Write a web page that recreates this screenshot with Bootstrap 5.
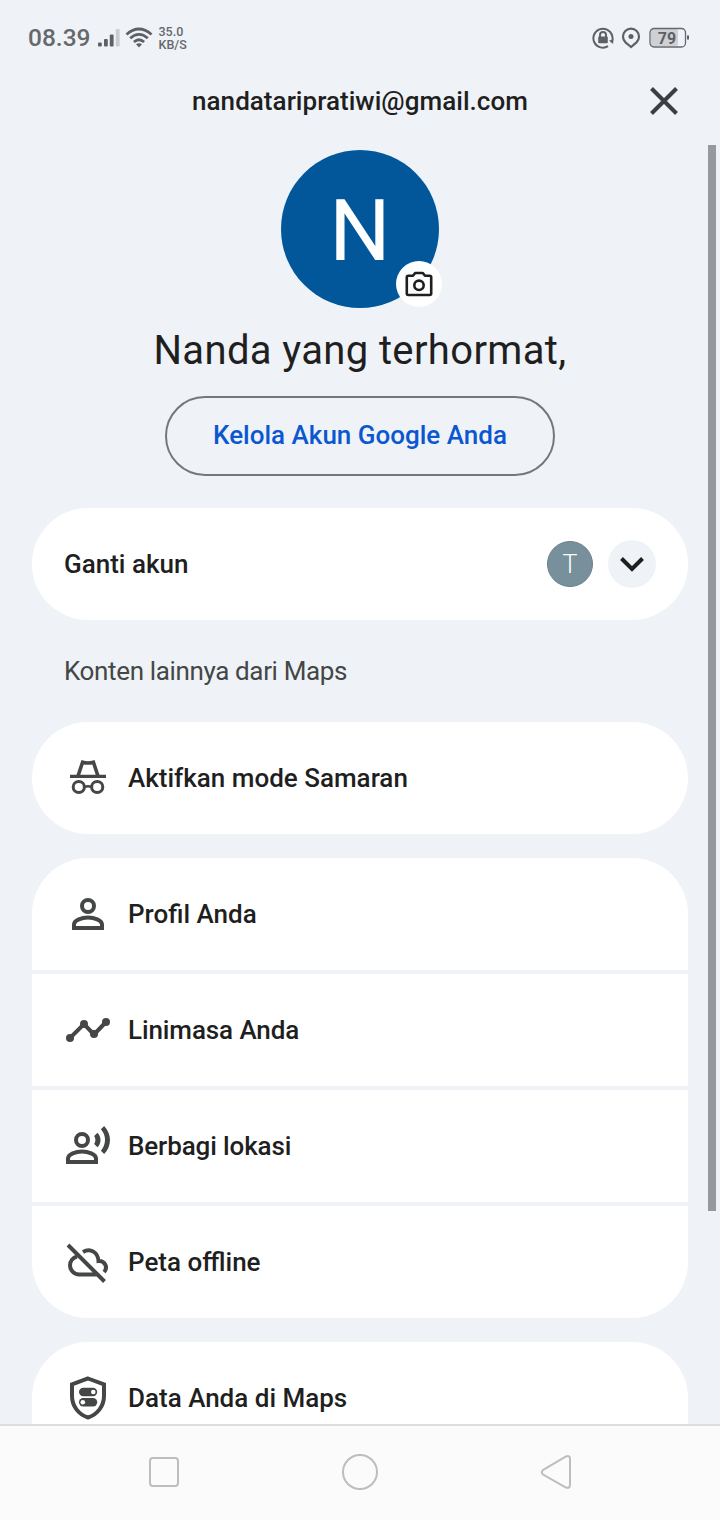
<!DOCTYPE html>
<html lang="id">
<head>
<meta charset="utf-8">
<meta name="viewport" content="width=device-width, initial-scale=1">
<title>Akun</title>
<link href="https://cdn.jsdelivr.net/npm/bootstrap@5.3.0/dist/css/bootstrap.min.css" rel="stylesheet">
<style>
body{background:#eff3f8;color:#1f1f1f;font-family:Roboto,"Liberation Sans",sans-serif;font-size:26px;line-height:32px;font-weight:500}
.screen{width:720px;height:1520px}
.status{height:72px;padding:3px 30px 0 28px;color:#66686c}
.clock{font-size:24.500px}
.speed{font-size:12.500px;line-height:13px}
.email-row{height:60px}
.t-email{margin-top:-2px;letter-spacing:.04px}
.close-btn{right:40px;top:13px}
.avatar{width:158px;height:158px;background:#02579b;color:#fff;font-size:86px;font-weight:400;margin-top:18px}
.avatar-letter{padding-top:3px}
.cam{width:46px;height:46px;right:-3px;bottom:1px;background:#fff}
.hello{font-size:40px;line-height:48px;font-weight:400;margin-top:19px;letter-spacing:.36px}
.manage{width:390px;height:80px;border:2px solid #74777a;color:#0b57d0;margin-top:21px;padding-bottom:2px}
.panel{background:#fff;border-radius:56px;overflow:hidden;margin:0 32px}
.item{height:112px;background:#fff;padding-left:32px;padding-right:32px}
.item svg{width:48px;height:48px;margin-right:16px;flex:none}
.group{background:#eff3f8;gap:4px}
.sub{font-weight:400;color:#444746;height:102px;padding-left:64px;letter-spacing:-.36px}
.tee{width:46px;height:46px;background:#78909c;color:#fff;font-size:25px;font-weight:300;border:1px solid #6b8089;padding-top:2px}
.chev{width:48px;height:48px;background:#eff3f8;margin-left:15px}
.item .chev svg{margin:0}
.cut{border-radius:56px 56px 0 0;height:82px}
.gap-panel{margin-top:24px}
.thumb{right:4px;top:145px;width:8px;height:1066px;background:#979a9c}
.sysnav{height:96px;background:#fbfbfb;border-top:2px solid #ddd;padding-bottom:4px}
</style>
</head>
<body>
<div class="screen position-relative d-flex flex-column overflow-hidden mx-auto">
  <div class="status d-flex align-items-center flex-shrink-0">
    <span class="clock">08.39</span>
    <svg style="margin-left:6px" width="24" height="20" viewBox="0 0 24 20" fill="#5e6064"><rect x="1" y="14.500" width="3.800" height="4" rx="1"/><rect x="7" y="11" width="3.800" height="7.500" rx="1"/><rect x="12.800" y="6.500" width="3.800" height="12" rx="1"/><rect x="18.800" y="1" width="3.800" height="17.500" rx="1" fill="#cbccd0"/></svg>
    <svg class="ms-1" width="28" height="22" viewBox="0 0 28 22" fill="none" stroke="#5e6064" stroke-width="2.800"><path d="M1.500 7.500Q14-3.500 26.500 7.500M5.200 11.300Q14 3.500 22.800 11.300M8.900 15Q14 10.500 19.100 15"/><path d="M11 17.300Q14 15 17 17.300L14 20.500Z" fill="#5e6064" stroke="none"/></svg>
    <span class="speed" style="margin-left:6px">35.0<br>KB/S</span>
    <svg class="ms-auto" width="22" height="22" viewBox="0 0 22 22" fill="none" stroke="#5e6064" stroke-width="2"><path d="M20 8.500A9.500 9.500 0 1 0 16 19.200M17.800 4.500A9.500 9.500 0 0 1 20.400 13"/><path d="M8 10V8a3 3 0 0 1 6 0v2"/><rect x="6.200" y="9.500" width="9.600" height="6.800" rx="1" fill="#5e6064" stroke="none"/><path d="M17 13.500l4.500-1-.5 4.500z" fill="#5e6064" stroke="none"/></svg>
    <svg style="margin-left:7px" width="20" height="22" viewBox="0 0 20 22" fill="none" stroke="#5e6064" stroke-width="2.200"><path d="M10 20L4.500 15.400A8 8 0 1 1 15.500 15.400Z"/><circle cx="10" cy="9.500" r="2.500" fill="#5e6064" stroke="none"/></svg>
    <svg style="margin-left:8px" width="41" height="22" viewBox="0 0 41 22"><rect x="2" y="2" width="27" height="17" rx="2" fill="#cfd0d3"/><rect x="1" y="1.500" width="35.500" height="18.500" rx="4" fill="none" stroke="#66686c" stroke-width="1.300"/><rect x="38" y="8.500" width="2" height="4" fill="#5e6064"/><text x="18" y="16.500" font-family="Roboto" font-size="16" font-weight="700" text-anchor="middle" fill="#5e6064">79</text></svg>
  </div>
  <div class="email-row position-relative d-flex align-items-center justify-content-center flex-shrink-0">
    <span class="t-email">nandataripratiwi@gmail.com</span>
    <svg class="close-btn position-absolute" width="32" height="32" viewBox="0 0 32 32" stroke="#3c3f41" stroke-width="4"><path d="M3.500 3.500l25 25M28.500 3.500l-25 25"/></svg>
  </div>
  <div class="avatar rounded-circle position-relative d-flex align-items-center justify-content-center align-self-center flex-shrink-0"><span class="avatar-letter">N</span>
    <div class="cam rounded-circle position-absolute d-flex align-items-center justify-content-center">
      <svg width="28" height="26" viewBox="0 0 28 26" fill="none" stroke="#1f1f1f" stroke-width="2.600" stroke-linejoin="round"><path d="M3.300 4.800H8L10.200 2H17.800L20 4.800H24.700Q26.200 4.800 26.200 6.300V22.500Q26.200 24 24.700 24H3.300Q1.800 24 1.800 22.500V6.300Q1.800 4.800 3.300 4.800Z"/><circle cx="14" cy="14.300" r="4.700"/></svg>
    </div>
  </div>
  <div class="hello text-center flex-shrink-0">Nanda yang terhormat,</div>
  <div class="manage rounded-pill d-flex align-items-center justify-content-center align-self-center flex-shrink-0">Kelola Akun Google Anda</div>
  <div class="panel flex-shrink-0" style="margin-top:32px">
    <div class="item d-flex align-items-center"><span>Ganti akun</span>
      <div class="tee rounded-circle ms-auto d-flex align-items-center justify-content-center">T</div>
      <div class="chev rounded-circle d-flex align-items-center justify-content-center"><svg viewBox="0 0 48 48" fill="none" stroke="#1f1f1f" stroke-width="4"><path d="M13.500 18.500L24 29l10.500-10.500"/></svg></div>
    </div>
  </div>
  <div class="sub d-flex align-items-center flex-shrink-0">Konten lainnya dari Maps</div>
  <div class="panel flex-shrink-0"><div class="item d-flex align-items-center">
    <svg viewBox="0 0 48 48" fill="none" stroke="#444746" stroke-width="3.600"><path d="M6 22.300H42" stroke-width="3.200"/><path d="M14 22L18.600 8.200Q24 9.800 29.400 8.200L34 22"/><circle cx="14.800" cy="33" r="5.600" stroke-width="3"/><circle cx="33.200" cy="33" r="5.600" stroke-width="3"/><path d="M20.500 32.800q3.500-1 7 0" stroke-width="2.600"/></svg>Aktifkan mode Samaran</div></div>
  <div class="panel group gap-panel d-flex flex-column flex-shrink-0">
    <div class="item d-flex align-items-center"><svg viewBox="0 0 48 48" fill="none" stroke="#444746" stroke-width="4"><circle cx="24" cy="16" r="6"/><path d="M10 38V34.500C10 30 18 27.500 24 27.500S38 30 38 34.500V38Z"/></svg>Profil Anda</div>
    <div class="item d-flex align-items-center" style="letter-spacing:-.1px"><svg viewBox="0 0 48 48" fill="#444746"><path d="M6 32L20 18 30 28.500 42 16" fill="none" stroke="#444746" stroke-width="4"/><circle cx="6" cy="32" r="4"/><circle cx="20" cy="18" r="4"/><circle cx="30" cy="28" r="4"/><circle cx="42" cy="16" r="4"/></svg>Linimasa Anda</div>
    <div class="item d-flex align-items-center" style="letter-spacing:-.12px"><svg viewBox="0 0 48 48" fill="none" stroke="#444746" stroke-width="4"><circle cx="18" cy="18" r="6"/><path d="M4 40V36.500C4 32 12 29.500 18 29.500S32 32 32 36.500V40Z"/><path transform="scale(2)" fill="#444746" stroke="none" d="M16.760 5.360l-1.680 1.690c.84 1.180.84 2.710 0 3.890l1.680 1.690c2.020-2.020 2.020-5.070 0-7.270zM20.070 2l-1.630 1.630c2.770 3.020 2.770 7.560 0 10.740L20.070 16c3.900-3.890 3.910-9.950 0-14z"/></svg>Berbagi lokasi</div>
    <div class="item d-flex align-items-center"><svg viewBox="0 0 48 48" fill="none" stroke="#444746" stroke-width="4"><path d="M4 7L40.500 43.500M13 18.500C9 19.500 6 23 6 27.500S10 36.500 15 36.500H34M19 14C26.500 9.500 34 14.500 34.500 23C40.500 22.500 44.500 29 40 34"/></svg>Peta offline</div>
  </div>
  <div class="panel cut gap-panel flex-shrink-0"><div class="item d-flex align-items-center"><svg viewBox="0 0 48 48" fill="none" stroke="#444746" stroke-width="4"><path d="M24 4.500L40 10.500V22C40 32 33.500 40.500 24 43.500 14.500 40.500 8 32 8 22V10.500Z"/><rect x="15" y="13.800" width="18.200" height="8.400" rx="4.200" fill="#444746" stroke="none"/><rect x="15" y="24" width="18.200" height="8.400" rx="4.200" fill="#444746" stroke="none"/><circle cx="29.300" cy="18" r="2.300" fill="#fff" stroke="none"/><circle cx="18.800" cy="28.200" r="2.300" fill="#fff" stroke="none"/></svg>Data Anda di Maps</div></div>
  <div class="sysnav flex-shrink-0 d-flex align-items-center justify-content-center">
    <svg width="460" height="80" viewBox="0 0 460 80" fill="none" stroke="#bdbdbd" stroke-width="2"><rect x="20" y="27" width="28" height="28" rx="3"/><circle cx="230" cy="41" r="17"/><path d="M412.800 39.200L436 25.500Q440 24 440 28V53Q440 58 436 56.500L413 43.500Q410.500 41.300 412.800 39.200Z"/></svg>
  </div>
  <div class="thumb position-absolute"></div>
</div>
<script src="https://cdn.jsdelivr.net/npm/bootstrap@5.3.0/dist/js/bootstrap.bundle.min.js"></script>
</body>
</html>
